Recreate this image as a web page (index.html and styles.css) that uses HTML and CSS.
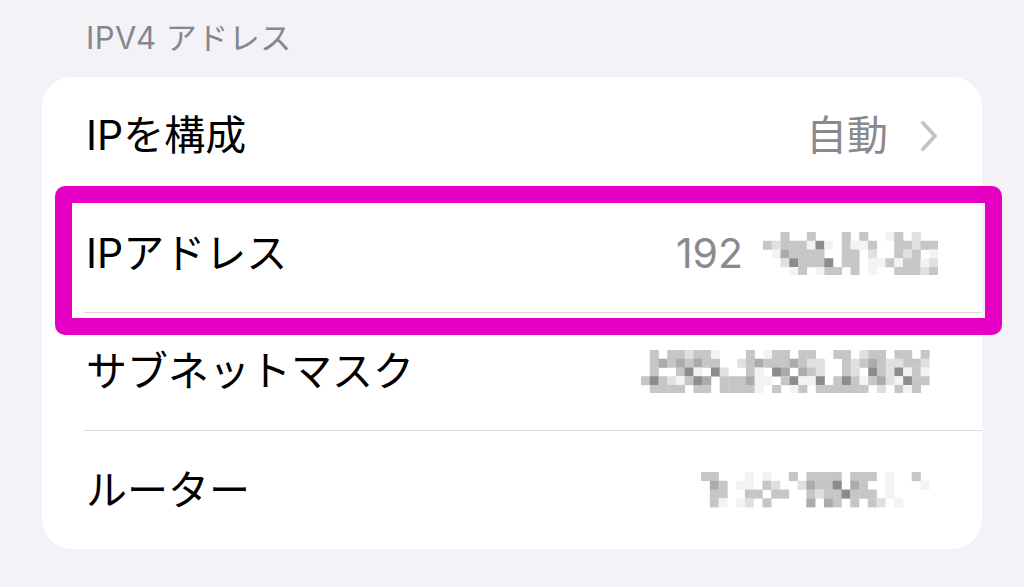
FILE: index.html
```html
<!DOCTYPE html>
<html lang="ja">
<head>
    <meta charset="UTF-8">
    <meta name="viewport" content="width=device-width, initial-scale=1.0">
    <title>IPV4アドレス</title>
    <link rel="stylesheet" href="styles.css">
</head>
<body>
    <div class="page">
        <div class="section-title">IPV4 アドレス</div>

        <div class="card">
            <div class="row">
                <span class="label">IPを構成</span>
                <span class="value">
                    自動
                    <svg class="chevron" width="18" height="32" viewBox="0 0 18 32">
                        <polyline points="3,3 15,16 3,29" fill="none" stroke="#c4c4c7" stroke-width="4" stroke-linecap="round" stroke-linejoin="round"/>
                    </svg>
                </span>
            </div>
            <div class="row">
                <span class="label">IPアドレス</span>
                <span class="value">
                    192
                    <svg class="mosaic" data-cell="8.75" data-rows="..c..c...c.c..ac.b..|cbcccaea.caac..ccbcc|.adcccc..cc.b..cbc.a|..beccce.cc.aacaccab|...ac.acc.c.a..cccbc"></svg>
                </span>
            </div>
            <div class="row">
                <span class="label">サブネットマスク</span>
                <span class="value">
                    <svg class="mosaic" data-cell="8.74" data-rows=".c.ccbcca...c.acc.cc..cc.bcc.cc.c.|.cdcdcdcc..bcdcccdcbb..cbcdcbbccb.|.c..cea.eb..ca.ed.dcb..cb.ecbeaca.|cecbaced.cccdaa.ceaae.cecacdbaecc.|.cccc.cc.cccca.c.ac.cccccc.b.cac.."></svg>
                </span>
            </div>
            <div class="row last">
                <span class="label">ルーター</span>
                <span class="value">
                    <svg class="mosaic" data-cell="8.78" data-rows="cc...a.a..c.cccc.ccc.a..c..|.dc.aa.cb..bdcce.dc..a...a.|.cc..cc.cc..cbcceccc.a.....|.ca.ab.c....d.dc.c.cb.a...."></svg>
                </span>
            </div>
        </div>

        <!-- annotation box drawn over the second row -->
        <div class="highlight"></div>
    </div>

    <script src="mosaic.js"></script>
</body>
</html>
```

FILE: styles.css
```css
body {
    margin: 0;
    padding: 0;
    background-color: #f2f2f7;
    font-family: Inter, "Noto Sans CJK JP", sans-serif;
    color: #000;
}
.page {
    position: relative;
    width: 1024px;
    height: 587px;
    overflow: hidden;
}
.section-title {
    padding: 18px 0 0 86px;
    height: 60px;
    box-sizing: border-box;
    font-size: 31px;
    line-height: 40px;
    letter-spacing: 0.5px;
    color: #86868b;
}
.card {
    margin-top: 17px;
    margin-left: 42px;
    width: 940px;
    background: #fff;
    border-radius: 30px;
    overflow: hidden;
}
.row {
    display: flex;
    align-items: center;
    justify-content: space-between;
    height: 118px;
    box-sizing: border-box;
    margin-left: 42px;
    padding: 0 44px 0 2px;
    border-bottom: 1px solid #d9d9dd;
}
.row.last {
    border-bottom: none;
}
.label {
    font-size: 41px;
    line-height: 1;
}
.value {
    display: flex;
    align-items: center;
    gap: 20px;
    font-size: 41px;
    line-height: 1;
    color: #8a8a8e;
}
.chevron {
    margin-left: 12px;
    display: block;
}
.mosaic {
    display: block;
}
.highlight {
    position: absolute;
    left: 55px;
    top: 186px;
    width: 947px;
    height: 149px;
    box-sizing: border-box;
    border: 17px solid #e500c4;
    border-radius: 10px;
}
```

FILE: mosaic.js
```js
// build the blurred (pixelated) values from the row strings
const shades = {
    a: '#f3f3f4',
    b: '#e0e0e2',
    c: '#c6c6c8',
    d: '#ababae',
    e: '#8c8c90'
};

document.querySelectorAll('.mosaic').forEach(function(svg) {
    const rows = svg.dataset.rows.split('|');
    const cell = parseFloat(svg.dataset.cell);
    const cols = Math.max.apply(null, rows.map(function(r) { return r.length; }));
    const w = cols * cell;
    const h = rows.length * cell;
    svg.setAttribute('width', w);
    svg.setAttribute('height', h);
    svg.setAttribute('viewBox', '0 0 ' + w + ' ' + h);

    let html = '';
    rows.forEach(function(row, y) {
        for (let x = 0; x < row.length; x++) {
            const fill = shades[row[x]];
            if (!fill) continue;
            html += '<rect x="' + (x * cell) + '" y="' + (y * cell) + '" width="' + (cell + 0.3) + '" height="' + (cell + 0.3) + '" fill="' + fill + '"/>';
        }
    });
    svg.innerHTML = html;
});
```
